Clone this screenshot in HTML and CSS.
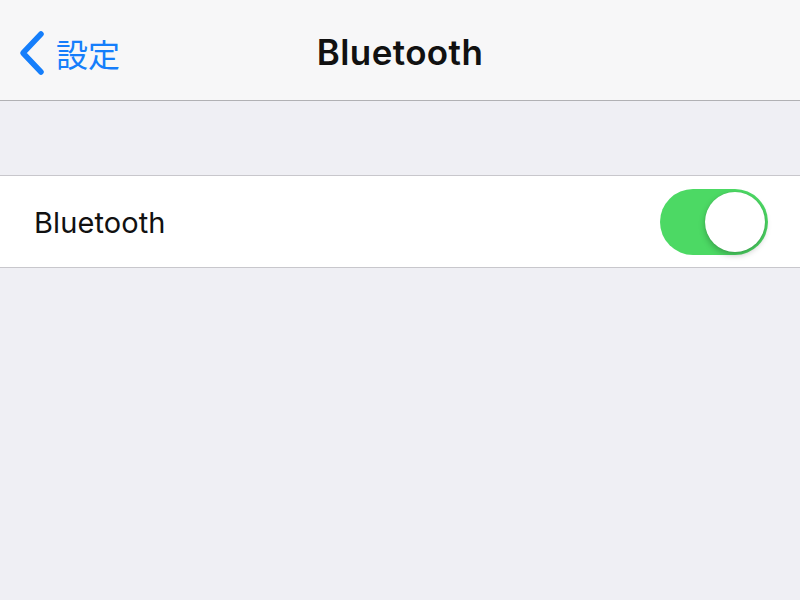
FILE: index.html
```html
<!DOCTYPE html>
<html lang="ja">
<head>
    <meta charset="UTF-8">
    <title>Bluetooth</title>
    <link rel="stylesheet" href="styles.css">
</head>
<body>
    <header class="nav-bar">
        <a class="back" href="#">
            <svg class="chevron" width="28" height="46" viewBox="0 0 28 46">
                <path d="M23 4 L5 23 L23 42" fill="none" stroke="#157efb" stroke-width="5.5" stroke-linecap="round" stroke-linejoin="round"/>
            </svg>
            <span>設定</span>
        </a>
        <h1 class="title">Bluetooth</h1>
    </header>

    <div class="spacer"></div>

    <div class="group">
        <div class="row">
            <span class="row-label">Bluetooth</span>
            <div class="toggle on">
                <div class="knob"></div>
            </div>
        </div>
    </div>
</body>
</html>
```

FILE: styles.css
```css
body {
    margin: 0;
    padding: 0;
    background-color: #efeff4;
    font-family: Inter, "Noto Sans CJK JP", sans-serif;
    height: 600px;
    overflow: hidden;
}

.nav-bar {
    height: 100px;
    background-color: #f7f7f8;
    border-bottom: 1px solid #b1b1b4;
    display: flex;
    align-items: center;
    justify-content: center;
    position: relative;
}

.back {
    position: absolute;
    left: 18px;
    top: 30px;
    display: flex;
    align-items: center;
    gap: 10px;
    color: #157efb;
    text-decoration: none;
    font-size: 32px;
    font-family: "Noto Sans CJK JP", sans-serif;
    line-height: 46px;
}

.title {
    margin: 0;
    font-size: 35px;
    font-weight: 600;
    color: #111;
    margin-top: 4px;
    letter-spacing: 0.4px;
}

.spacer {
    height: 74px;
}

.group {
    background-color: #fff;
    border-top: 1px solid #c8c7cc;
    border-bottom: 1px solid #c8c7cc;
}

.row {
    height: 91px;
    display: flex;
    align-items: center;
    justify-content: space-between;
    padding: 0 32px 0 34px;
}

.row-label {
    font-size: 29px;
    color: #111;
    letter-spacing: 0.1px;
    margin-top: 2px;
}

.toggle {
    width: 108px;
    height: 66px;
    border-radius: 33px;
    background-color: #4cd964;
    position: relative;
}

.knob {
    position: absolute;
    top: 3px;
    right: 3px;
    width: 60px;
    height: 60px;
    border-radius: 50%;
    background-color: #fff;
    box-shadow: 0 3px 6px rgba(0, 0, 0, 0.25), 0 0 1px rgba(0, 0, 0, 0.15);
}
```
